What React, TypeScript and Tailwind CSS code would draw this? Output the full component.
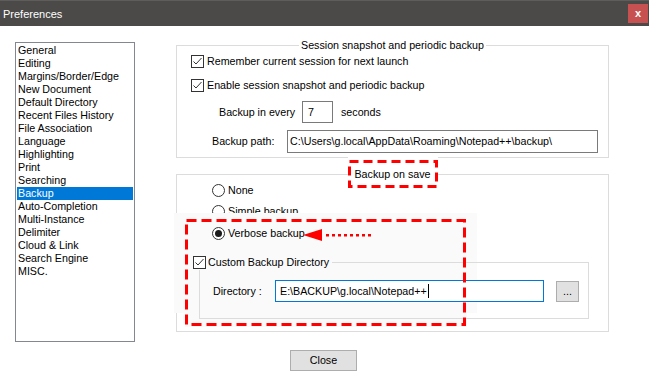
import React from "react";

const items = [
  "General",
  "Editing",
  "Margins/Border/Edge",
  "New Document",
  "Default Directory",
  "Recent Files History",
  "File Association",
  "Language",
  "Highlighting",
  "Print",
  "Searching",
  "Backup",
  "Auto-Completion",
  "Multi-Instance",
  "Delimiter",
  "Cloud & Link",
  "Search Engine",
  "MISC.",
];

function Check() {
  return (
    <svg width="13" height="13" viewBox="0 0 13 13" className="shrink-0">
      <rect x="0.5" y="0.5" width="12" height="12" fill="#fff" stroke="#333" />
      <polyline points="2.5,6.5 5,9 10.5,3" fill="none" stroke="#333" strokeWidth="1" />
    </svg>
  );
}

function Radio({ on }: { on?: boolean }) {
  return (
    <svg width="13" height="13" viewBox="0 0 13 13" className="shrink-0">
      <circle cx="6.5" cy="6.5" r="6" fill="#fff" stroke="#333" />
      {on && <circle cx="6.5" cy="6.5" r="3.5" fill="#1a1a1a" />}
    </svg>
  );
}

export default function App() {
  return (
    <div
      className="relative w-[649px] h-[373px] overflow-hidden bg-white text-[10.7px] text-black whitespace-nowrap"
      style={{ fontFamily: '"Liberation Sans", Arial, sans-serif' }}
    >
      {/* Title bar */}
      <div className="flex h-[26px] items-center justify-between border-t border-[#5e5d5b] bg-[#4b4a48] pl-[3px] pr-[1px]">
        <span className="text-[11px] leading-[16px] text-white">Preferences</span>
        <div className="flex h-[19px] w-[20px] items-center justify-center bg-[#c75050] text-[11px] font-bold leading-none text-white">
          x
        </div>
      </div>

      {/* Body */}
      <div className="flex pl-[15px] pt-[11px]">
        {/* Category list */}
        <div className="mt-[5px] h-[300px] w-[120px] shrink-0 border border-[#828790] px-[1px] pt-[1px]">
          {items.map((it) => (
            <div
              key={it}
              className={
                "h-[13px] pl-[1px] leading-[13px] " +
                (it === "Backup" ? "bg-[#0078d7] text-white" : "")
              }
            >
              {it}
            </div>
          ))}
        </div>

        {/* Right column */}
        <div className="ml-[41px] flex flex-col">
          {/* Session snapshot group */}
          <fieldset className="w-[433px] border border-[#dcdcdc] pb-[4px]">
            <legend className="mx-auto h-[16px] px-[2px] leading-[16px]">
              Session snapshot and periodic backup
            </legend>
            <div className="flex h-[16px] items-center gap-[3px] pl-[14px]">
              <Check />
              <span>Remember current session for next launch</span>
            </div>
            <div className="mt-[8px] flex h-[16px] items-center gap-[3px] pl-[14px]">
              <Check />
              <span>Enable session snapshot and periodic backup</span>
            </div>
            <div className="mt-[8px] flex h-[22px] items-center pl-[42px]">
              <span className="w-[83px]">Backup in every</span>
              <div className="h-[22px] w-[31px] border border-[#7a7a7a] pl-[5px] leading-[20px]">7</div>
              <span className="ml-[8px]">seconds</span>
            </div>
            <div className="mt-[7px] flex h-[23px] items-center pl-[35px]">
              <span className="w-[75px]">Backup path:</span>
              <div className="h-[23px] w-[311px] overflow-hidden border border-[#7a7a7a] pl-[2px] leading-[21px]">
                C:\Users\g.local\AppData\Roaming\Notepad++\backup\
              </div>
            </div>
          </fieldset>

          {/* Backup on save group */}
          <fieldset className="mt-[2px] w-[433px] border border-[#dcdcdc] pb-[12px]">
            <legend className="relative mx-auto flex h-[28px] w-[90px] items-center justify-center bg-white">
              <span className="absolute inset-x-0 -top-[6px] h-[6px] bg-white" />
              <svg className="absolute inset-0" width="90" height="28">
                <rect
                  x="1.5"
                  y="1.5"
                  width="87"
                  height="25"
                  fill="none"
                  stroke="#ff0000"
                  strokeWidth="3"
                  strokeDasharray="9 5"
                />
              </svg>
              <span className="relative leading-[16px]">Backup on save</span>
            </legend>

            <div className="-mt-[6px] flex h-[16px] items-center gap-[3px] pl-[35px]">
              <Radio />
              <span>None</span>
            </div>
            <div className="mt-[5px] flex h-[16px] items-center gap-[3px] pl-[35px]">
              <Radio />
              <span>Simple backup</span>
            </div>
            <div className="relative z-10 mt-[6px] flex h-[16px] items-center gap-[3px] pl-[35px]">
              <Radio on />
              <span>Verbose backup</span>
            </div>

            <fieldset className="relative z-10 ml-[22px] mt-[13px] w-[390px] border border-[#dcdcdc] pb-[16px]">
              <legend className="-ml-[7px] flex h-[16px] items-center gap-[2px] pr-[3px]">
                <Check />
                <span className="leading-[16px]">Custom Backup Directory</span>
              </legend>
              <div className="mt-[10px] flex h-[22px] items-center pl-[13px]">
                <span className="w-[62px]">Directory :</span>
                <div className="flex h-[22px] w-[269px] items-center border border-[#0078d7] bg-white pl-[4px]">
                  <span>E:\BACKUP\g.local\Notepad++</span>
                  <span className="ml-[1px] inline-block h-[14px] w-[1px] bg-black" />
                </div>
                <div className="ml-[12px] flex h-[21px] w-[23px] items-center justify-center border border-[#adadad] bg-[#e1e1e1] leading-none">
                  ...
                </div>
              </div>
            </fieldset>
          </fieldset>

          <div className="ml-[114px] mt-[18px] flex h-[21px] w-[67px] items-center justify-center border border-[#adadad] bg-[#e1e1e1]">
            Close
          </div>
        </div>
      </div>

      {/* Pasted highlight region (annotation background) */}
      <div className="absolute left-[174px] top-[213px] z-0 h-[100px] w-[303px] bg-[#fafafa]" />
      <div className="absolute left-[185px] top-[300px] z-0 h-[27px] w-[282px] bg-[#fafafa]" />

      {/* Annotation: dashed box + arrow */}
      <svg className="absolute left-0 top-0 z-20" width="649" height="373">
        <rect
          x="186.5"
          y="220.5"
          width="278"
          height="104"
          fill="none"
          stroke="#ff0000"
          strokeWidth="3"
          strokeDasharray="10 5"
        />
        <polygon points="303,235 322,229 322,241" fill="#ff0000" />
        {[326, 332, 338, 344, 350, 356, 362, 368].map((x) => (
          <rect key={x} x={x} y="234" width="3" height="2.5" fill="#ff0000" />
        ))}
      </svg>
    </div>
  );
}
